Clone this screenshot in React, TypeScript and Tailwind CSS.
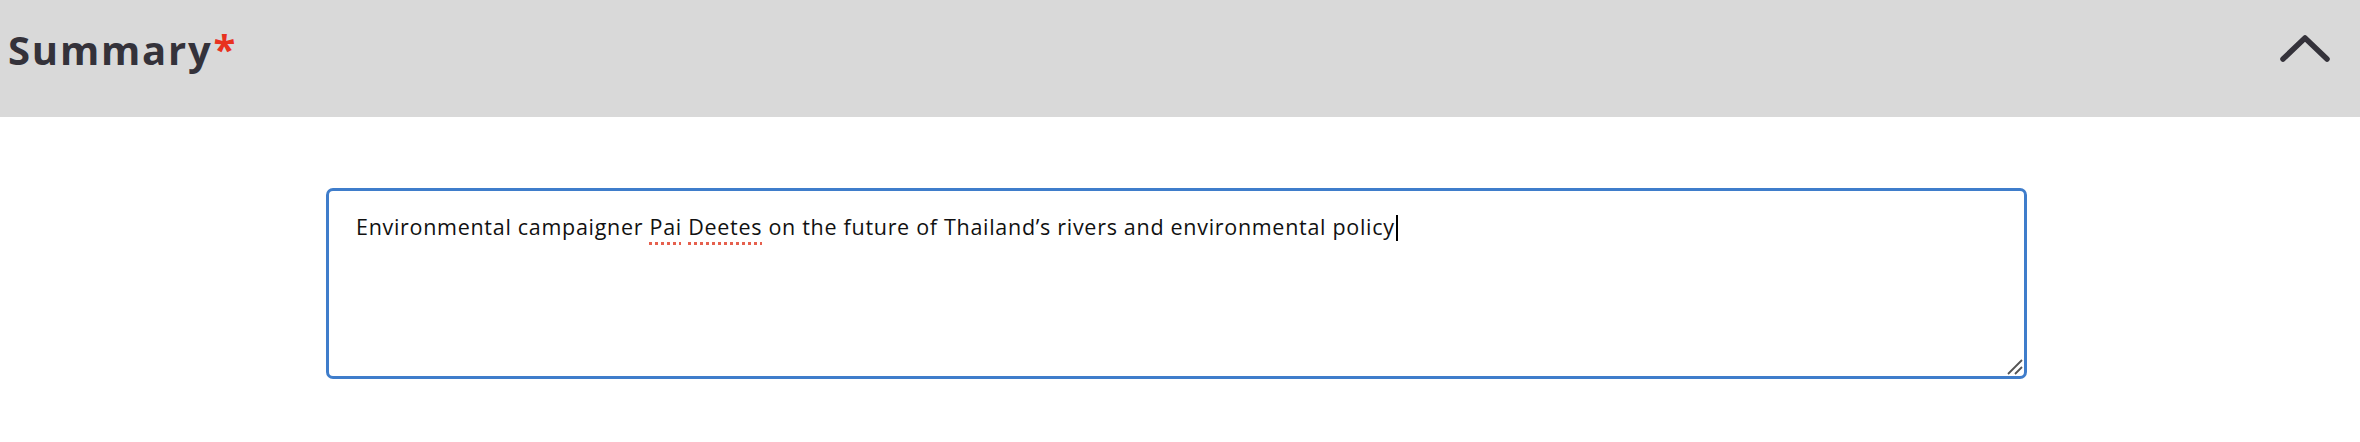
import React from "react";

export default function App() {
  return (
    <div className="w-[2360px] h-[442px] bg-white" style={{ fontFamily: '"Open Sans", "Liberation Sans", sans-serif' }}>
      <div className="h-[117px] bg-[#d9d9d9] flex items-start justify-between pl-[8px] pr-[30px] pt-[22px]">
        <h2 className="text-[40px] leading-[56px] font-bold text-[#34323a] tracking-[1.8px]">
          Summary<span className="text-[#e8321f] relative -top-[1px] ml-[1px]">*</span>
        </h2>
        <svg width="50" height="30" viewBox="0 0 50 30" className="mt-[12px]" fill="none">
          <path d="M3 25 L25 4 L47 25" stroke="#34323a" strokeWidth="5.5" strokeLinecap="round" strokeLinejoin="round" />
        </svg>
      </div>
      <div className="pt-[71px] pl-[326px]">
        <div className="relative w-[1701px] h-[191px] border-[3px] border-[#3f7dcb] rounded-[7px] bg-white px-[27px] pt-[19px]">
          <p className="text-[21.5px] leading-[34px] text-[#111] tracking-[0.7px] whitespace-nowrap">
            Environmental campaigner{" "}
            <span className="underline decoration-dotted decoration-[#e6604e] decoration-[3px] underline-offset-[7px]">Pai</span>{" "}
            <span className="underline decoration-dotted decoration-[#e6604e] decoration-[3px] underline-offset-[7px]">Deetes</span>{" "}
            on the future of Thailand’s rivers and environmental policy
            <span className="inline-block w-[2px] h-[26px] bg-black align-[-6px] ml-[1px]" />
          </p>
          <svg width="18" height="18" viewBox="0 0 18 18" className="absolute right-[1px] bottom-[1px]">
            <path d="M3 17 L17 3 M10 17 L17 10" stroke="#555" strokeWidth="1.8" />
          </svg>
        </div>
      </div>
    </div>
  );
}
